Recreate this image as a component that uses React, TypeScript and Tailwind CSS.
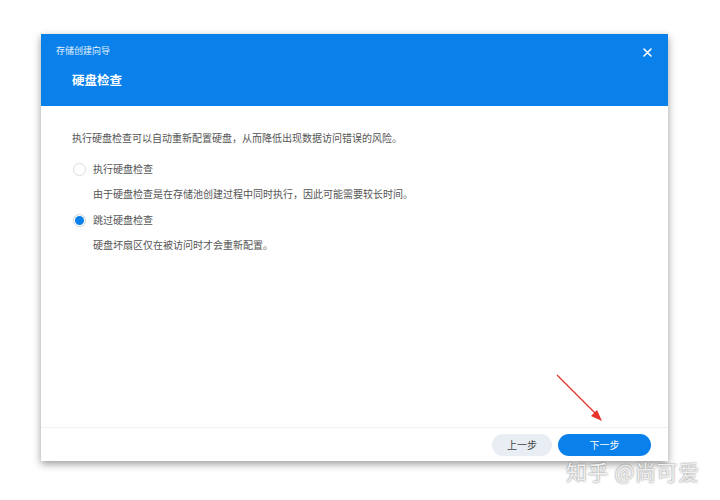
import React, { useState } from 'react';

const options = [
  { id: 'run', label: '执行硬盘检查', desc: '由于硬盘检查是在存储池创建过程中同时执行，因此可能需要较长时间。' },
  { id: 'skip', label: '跳过硬盘检查', desc: '硬盘坏扇区仅在被访问时才会重新配置。' },
];

export default function App() {
  const [choice, setChoice] = useState('skip');

  return (
    <div className="relative w-[720px] h-[500px] bg-white overflow-hidden font-['Noto_Sans_CJK_SC','Noto_Sans',sans-serif]">
      <div className="ml-[41px] mt-[34px] w-[627px] h-[427px] bg-white flex flex-col shadow-[0_3px_8px_rgba(0,0,0,0.4)]">
        {/* Header */}
        <div className="h-[72px] bg-[#0a80ea] text-white flex flex-col">
          <div className="flex items-center justify-between pl-[15px] pr-[16px] pt-[9px] h-[24px]">
            <span className="text-[9px] leading-3 text-white/90">存储创建向导</span>
            <svg width="9" height="9" viewBox="0 0 9 9" className="mt-[4px]">
              <path d="M1 1 L8 8 M8 1 L1 8" stroke="white" strokeWidth="1.6" strokeLinecap="round" />
            </svg>
          </div>
          <div className="pl-[31px] mt-[14px] text-[12.5px] leading-4 font-bold">硬盘检查</div>
        </div>

        {/* Body */}
        <div className="flex-1 px-[31px] pt-[24px] text-[10px] text-[#555]">
          <p className="leading-4">执行硬盘检查可以自动重新配置硬盘，从而降低出现数据访问错误的风险。</p>
          <div className="mt-[15px] flex flex-col">
            {options.map((o, i) => (
              <div key={o.id} className={i > 0 ? 'mt-[10px]' : ''}>
                <button
                  onClick={() => setChoice(o.id)}
                  className="flex items-center h-4 text-left"
                >
                  <span
                    className={`ml-[1px] w-[13px] h-[13px] rounded-full border flex items-center justify-center ${
                      choice === o.id ? 'border-[#c9d3de]' : 'border-[#d8dde3]'
                    }`}
                  >
                    {choice === o.id && <span className="w-[9px] h-[9px] rounded-full bg-[#0a80ea]" />}
                  </span>
                  <span className="ml-[7px] leading-4">{o.label}</span>
                </button>
                <p className="mt-[9px] ml-[21px] leading-4">{o.desc}</p>
              </div>
            ))}
          </div>
        </div>

        {/* Footer */}
        <div className="h-[34px] border-t border-[#eef0f2] flex items-center justify-end gap-[6px] pr-[17px]">
          <button className="w-[60px] h-[22px] rounded-full bg-[#e9eef4] text-[10px] text-[#444]">上一步</button>
          <button className="w-[93px] h-[22px] rounded-full bg-[#0a80ea] text-[10px] text-white">下一步</button>
        </div>
      </div>

      {/* red annotation arrow */}
      <svg className="absolute left-0 top-0" width="720" height="500">
        <line x1="557" y1="375" x2="597" y2="415" stroke="#e8312a" strokeWidth="1.3" />
        <polygon points="602,421 591,416 597,410" fill="#e8312a" />
      </svg>

      {/* watermark */}
      <div className="absolute left-[566px] top-[459px] text-[21px] leading-6 text-[#efefef] [text-shadow:0_0_2px_rgba(0,0,0,0.55)] tracking-[0.6px]">
        知乎 @尚可爱
      </div>
    </div>
  );
}
